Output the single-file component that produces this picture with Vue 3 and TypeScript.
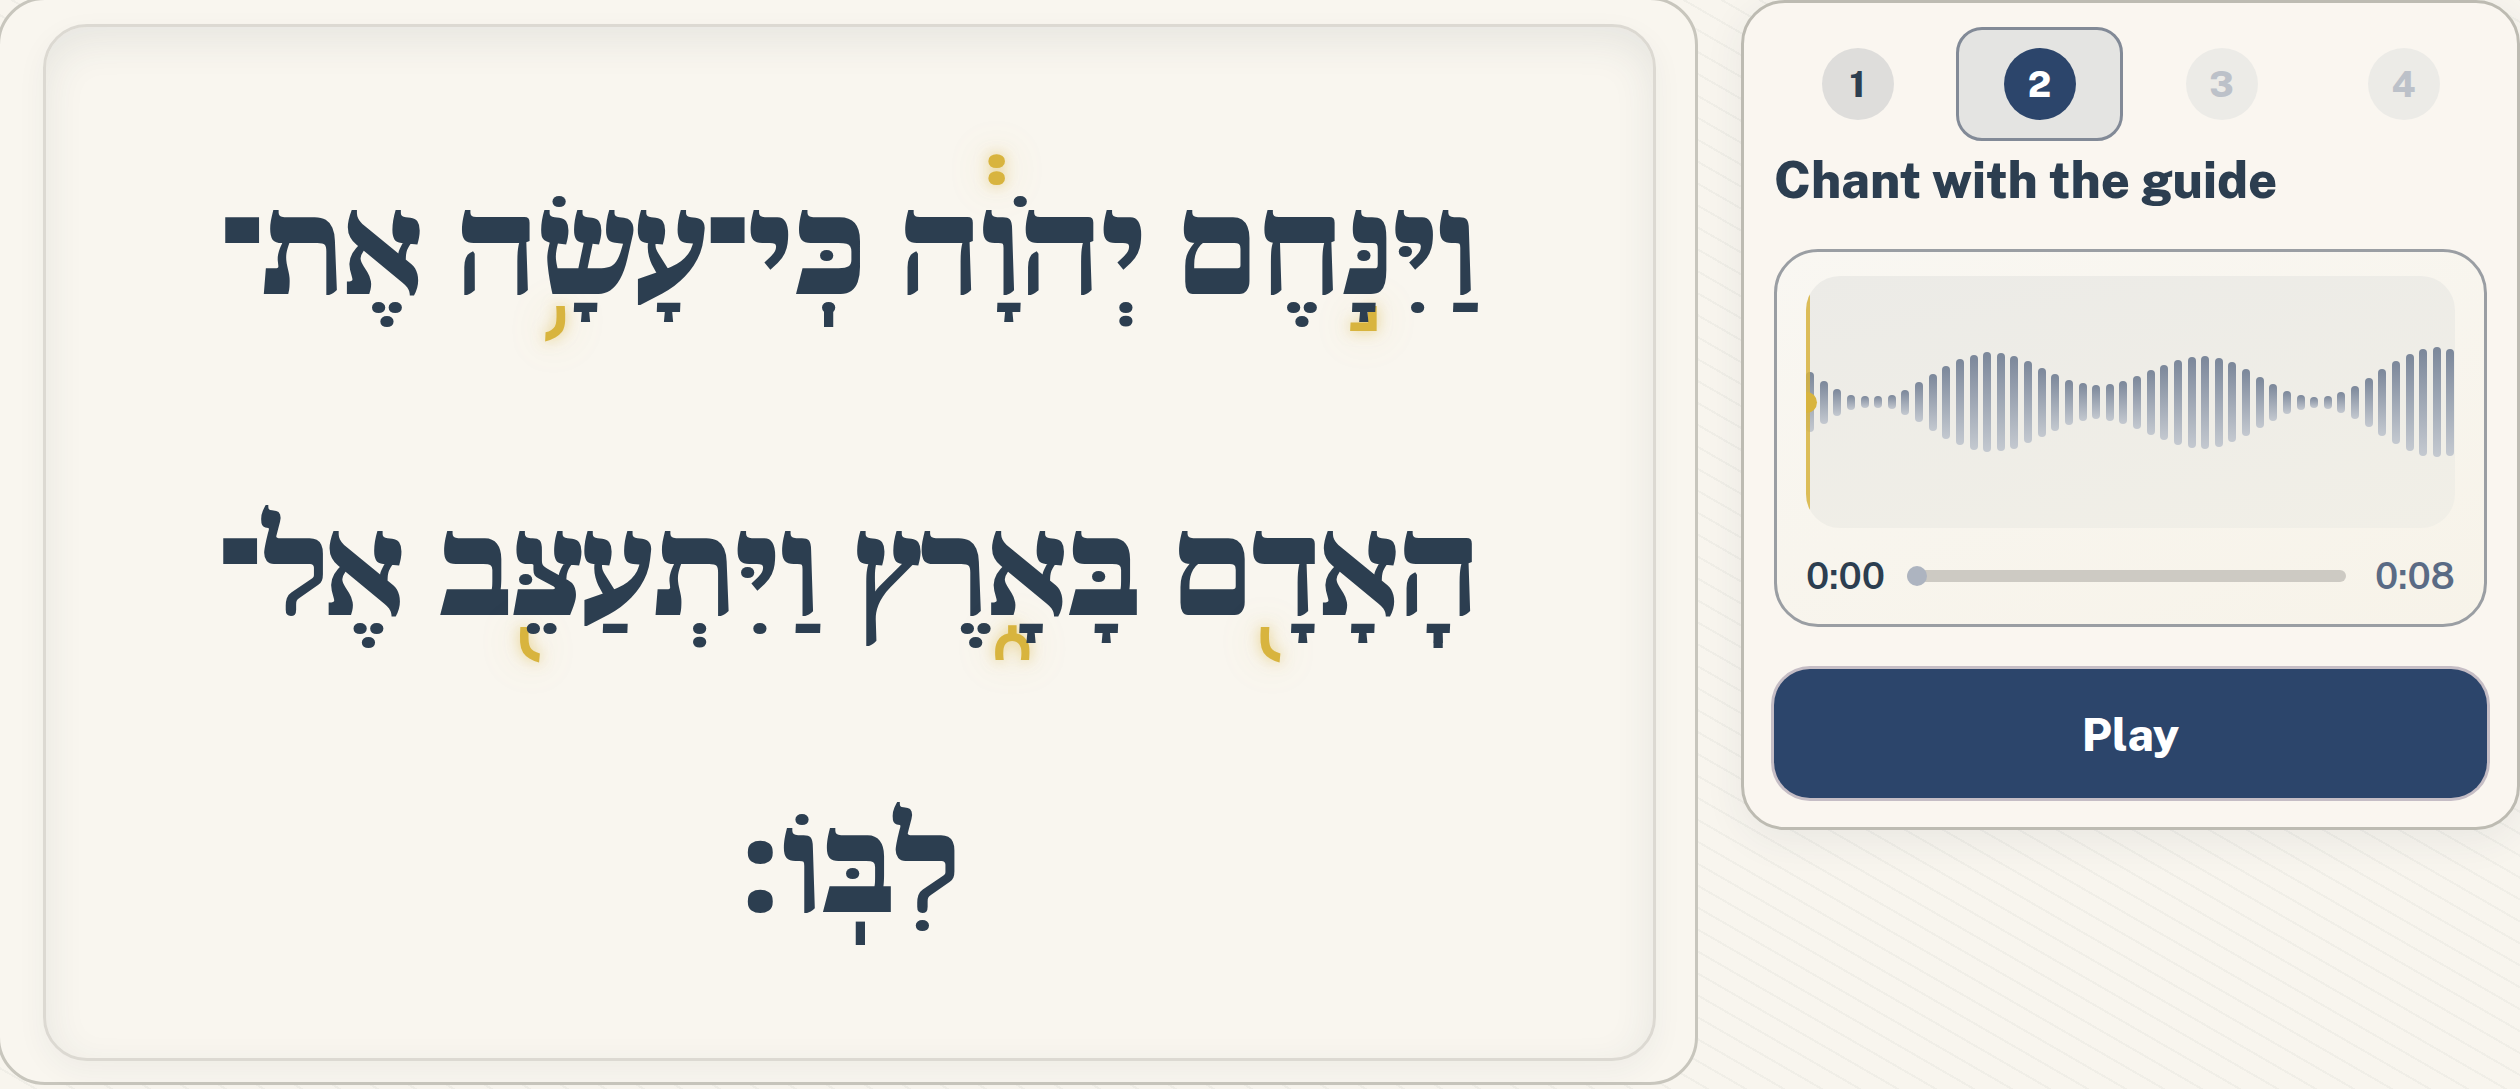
<script setup lang="ts">
interface Seg { t: string; g?: boolean }
const segs: Seg[] = [
  { t: 'וַיִּנָּ' }, { t: '\u05A3', g: true },
  { t: 'חֶם יְהֹוָ' }, { t: '\u0594', g: true },
  { t: 'ה כִּֽי־עָשָׂ' }, { t: '\u05A5', g: true },
  { t: 'ה אֶת־\u200Bהָֽאָדָ' }, { t: '\u0596', g: true },
  { t: 'ם בָּאָ' }, { t: '\u0591', g: true },
  { t: 'רֶץ וַיִּתְעַצֵּ' }, { t: '\u0596', g: true },
  { t: 'ב אֶל־\u200Bלִבּֽוֹ׃' },
]
const bars = [60,43,27,15,12,12,14,25,40,57,73,86,95,100,98,93,82,69,57,45,38,34,37,43,53,65,75,85,91,93,89,80,67,51,37,23,15,11,13,21,33,49,67,83,97,107,110,107]
const steps = [1,2,3,4]
</script>

<template>
  <div class="page">
    <main class="outer">
      <div class="inner">
        <p class="verse" dir="rtl" lang="he"><span v-for="(s,i) in segs" :key="i" :class="{ trope: s.g }">{{ s.t }}</span></p>
      </div>
    </main>
    <aside class="side">
      <div class="steps">
        <div v-for="n in steps" :key="n" class="step" :class="{ active: n === 2, done: n === 1, todo: n > 2 }">
          <span class="num">{{ n }}</span>
        </div>
      </div>
      <h2 class="title">Chant with the guide</h2>
      <section class="player">
        <div class="wave">
          <span v-for="(h,i) in bars" :key="i" class="bar" :style="{ height: h + 'px' }"></span>
          <i class="head"></i>
          <i class="dot"></i>
        </div>
        <div class="times">
          <span class="now">0:00</span>
          <div class="track"><i class="thumb"></i></div>
          <span class="end">0:08</span>
        </div>
      </section>
      <button class="play">Play</button>
    </aside>
  </div>
</template>

<style>
html, body { margin: 0; background: #f8f5ee; }
</style>

<style scoped>
.page {
  width: 2520px; height: 1089px; overflow: hidden; display: flex; align-items: flex-start;
  background: repeating-linear-gradient(30deg, #f8f5ee 0 17px, #f0eee7 17px 19px);
  font-family: "Public Sans", Inter, "Liberation Sans", sans-serif; color: #2c3e50;
}
.outer {
  box-sizing: border-box; flex: none; width: 1701px; height: 1088px; margin: -3px 0 0 -3px;
  padding: 24px 39px 21px 43px;
  background: #f9f6ef; border: 3px solid #c8c6bd; border-radius: 48px;
  display: flex;
}
.inner {
  box-sizing: border-box; flex: 1; border: 3px solid #dcd9d2; border-radius: 44px;
  background: #f9f6ef;
  box-shadow: inset 0 14px 40px rgba(44,62,80,.09), 0 10px 30px rgba(44,62,80,.05);
  padding: 57px 30px 0; display: flex; justify-content: center;
}
.verse {
  margin: 0; text-align: center; font-family: "Noto Serif Hebrew", "Liberation Serif", serif; font-weight: 900;
  font-size: 130px; line-height: 295px; color: #2c3e50; max-width: 1400px;
}
.trope {
  color: #d8b43e; font-size: 1.25em; line-height: 321px;
  text-shadow: 0 0 14px rgba(216,180,62,.55), 0 0 40px rgba(216,180,62,.25);
}
.side {
  box-sizing: border-box; flex: none; width: 779px; height: 830px; margin-left: 43px;
  border: 3px solid #bdbbb2; border-radius: 44px; background: #faf6f0;
  padding: 24px 30px 0; box-shadow: 0 10px 40px rgba(44,62,80,.07);
}
.steps { display: grid; grid-template-columns: repeat(4, 1fr); gap: 15px; }
.step {
  box-sizing: border-box; height: 114px; display: flex; align-items: center; justify-content: center;
  border: 3px solid transparent; border-radius: 26px;
}
.step.active { background: #e4e4e2; border-color: #828a97; }
.num {
  width: 72px; height: 72px; border-radius: 50%; display: flex; align-items: center; justify-content: center;
  font-weight: 800; font-size: 36px; background: #dedddb; color: #2c3e50;
}
.active .num { background: #2c456b; color: #fff; }
.todo .num { background: #ecebe7; color: #bcc1c9; }
.title { margin: 10px 0 0; font-size: 50.5px; line-height: 58px; font-weight: 800; color: #2c3e50; }
.player {
  box-sizing: border-box; margin-top: 40px; height: 378px; border: 3px solid #9a9ea3; border-radius: 44px;
  padding: 24px 29px 0;
  background: linear-gradient(160deg, #f9f7f2, #f7f3e9);
}
.wave {
  position: relative; height: 252px; border-radius: 34px; overflow: hidden;
  display: flex; align-items: center; justify-content: space-between;
  background: linear-gradient(170deg, #ecebe7, #f1efe7);
}
.bar { width: 8px; border-radius: 4px; background: linear-gradient(#7b879a, #c4c9d0); }
.head { position: absolute; left: 0; top: 0; bottom: 0; width: 4px; background: rgba(216,180,62,.85); }
.dot { position: absolute; left: -10px; top: 116px; width: 21px; height: 21px; border-radius: 50%; background: #d8b43e; }
.times { display: flex; align-items: center; margin-top: 26px; font-size: 37px; line-height: 44px; font-weight: 600; }
.now { color: #2c3e50; }
.end { color: #5a6b85; }
.track { position: relative; flex: 1; height: 12px; margin: 0 29px 0 22px; border-radius: 6px; background: #cdcac3; }
.thumb { position: absolute; left: 0; top: -4px; width: 20px; height: 20px; border-radius: 50%; background: #adb4c0; }
.play {
  display: block; box-sizing: border-box; width: 100%; height: 129px; margin-top: 42px; border: 0; border-radius: 36px;
  background: #2c456b; color: #fff; font-family: inherit; font-size: 46px; font-weight: 800;
  box-shadow: 0 0 0 3px #c5bdc5;
}
</style>
